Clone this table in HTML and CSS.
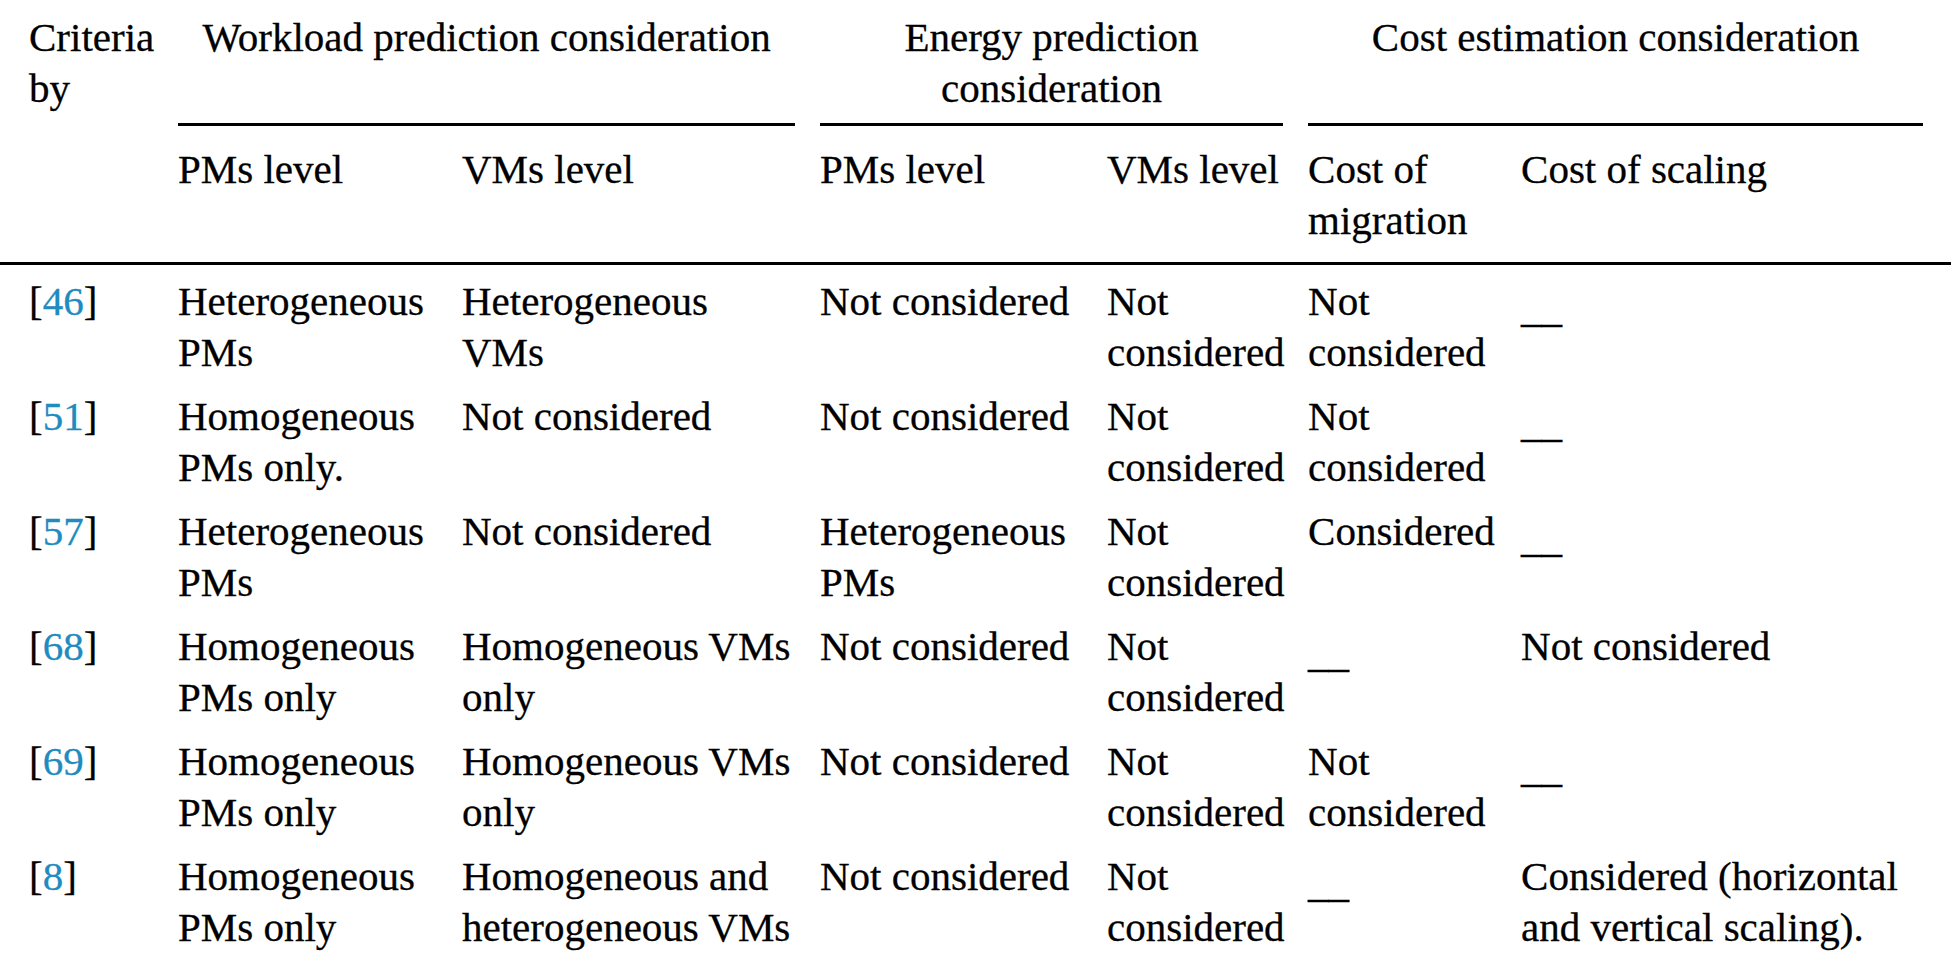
FILE: index.html
```html
<!DOCTYPE html>
<html lang="en">
<head>
<meta charset="utf-8">
<title>Comparison table</title>
<link rel="stylesheet" href="styles.css">
</head>
<body>
<table class="cmp">
  <colgroup>
    <col class="c0"><col class="c1"><col class="c2"><col class="c3"><col class="c4"><col class="c5"><col class="c6">
  </colgroup>
  <thead>
    <tr>
      <th class="crit" rowspan="2">Criteria by</th>
      <th class="group" colspan="2"><div class="rule">Workload prediction consideration</div></th>
      <th class="group" colspan="2"><div class="rule">Energy prediction consideration</div></th>
      <th class="group last" colspan="2"><div class="rule">Cost estimation consideration</div></th>
    </tr>
    <tr class="sub">
      <th>PMs level</th>
      <th>VMs level</th>
      <th>PMs level</th>
      <th>VMs level</th>
      <th>Cost of migration</th>
      <th>Cost of scaling</th>
    </tr>
  </thead>
  <tbody>
    <tr>
      <td class="ref">[<span class="num">46</span>]</td>
      <td>Heterogeneous PMs</td>
      <td>Heterogeneous VMs</td>
      <td>Not considered</td>
      <td>Not considered</td>
      <td>Not considered</td>
      <td><span class="dash">__</span></td>
    </tr>
    <tr>
      <td class="ref">[<span class="num">51</span>]</td>
      <td>Homogeneous PMs only.</td>
      <td>Not considered</td>
      <td>Not considered</td>
      <td>Not considered</td>
      <td>Not considered</td>
      <td><span class="dash">__</span></td>
    </tr>
    <tr>
      <td class="ref">[<span class="num">57</span>]</td>
      <td>Heterogeneous PMs</td>
      <td>Not considered</td>
      <td>Heterogeneous PMs</td>
      <td>Not considered</td>
      <td>Considered</td>
      <td><span class="dash">__</span></td>
    </tr>
    <tr>
      <td class="ref">[<span class="num">68</span>]</td>
      <td>Homogeneous PMs only</td>
      <td>Homogeneous VMs only</td>
      <td>Not considered</td>
      <td>Not considered</td>
      <td><span class="dash">__</span></td>
      <td>Not considered</td>
    </tr>
    <tr>
      <td class="ref">[<span class="num">69</span>]</td>
      <td>Homogeneous PMs only</td>
      <td>Homogeneous VMs only</td>
      <td>Not considered</td>
      <td>Not considered</td>
      <td>Not considered</td>
      <td><span class="dash">__</span></td>
    </tr>
    <tr>
      <td class="ref">[<span class="num">8</span>]</td>
      <td>Homogeneous PMs only</td>
      <td>Homogeneous and heterogeneous VMs</td>
      <td>Not considered</td>
      <td>Not considered</td>
      <td><span class="dash">__</span></td>
      <td>Considered (horizontal and vertical scaling).</td>
    </tr>
  </tbody>
</table>
</body>
</html>
```

FILE: styles.css
```css
html, body {
  margin: 0;
  padding: 0;
  background: #ffffff;
}

.cmp {
  width: 1951px;
  table-layout: fixed;
  border-collapse: separate;
  border-spacing: 0;
  font-family: "Liberation Serif", "Times New Roman", Times, serif;
  font-size: 41px;
  line-height: 51px;
  color: #000000;
  -webkit-text-stroke: 0.3px #000000;
}

.cmp th,
.cmp td {
  box-sizing: border-box;
  font-weight: normal;
  text-align: left;
  vertical-align: top;
  padding: 0 25px 0 0;
}

.c0 { width: 178px; }
.c1 { width: 284px; }
.c2 { width: 358px; }
.c3 { width: 287px; }
.c4 { width: 201px; }
.c5 { width: 213px; }
.c6 { width: 430px; }

.cmp th.crit {
  padding: 12px 10px 0 29px;
  border-bottom: 3px solid #000;
}

.cmp th.group {
  padding: 0 25px 0 0;
}

.cmp th.group.last {
  padding-right: 28px;
}

.rule {
  height: 102px;
  padding: 12px 0 9px;
  border-bottom: 3px solid #000;
  text-align: center;
}

.sub th {
  padding-top: 18px;
  padding-bottom: 16px;
  border-bottom: 3px solid #000;
}

.cmp td {
  padding-top: 11px;
  padding-bottom: 2px;
}

.cmp td.ref {
  padding-left: 29px;
  padding-right: 10px;
}

.num {
  color: #1f8bbf;
  -webkit-text-stroke-color: #1f8bbf;
}

.dash {
  vertical-align: -7px;
}
```
